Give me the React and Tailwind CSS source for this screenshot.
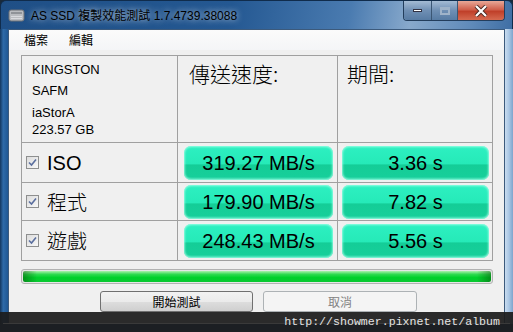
import React from "react";

// data
const rows = [
  { name: "ISO", speed: "319.27 MB/s", time: "3.36 s", h: "h-[39px]" },
  { name: "程式", speed: "179.90 MB/s", time: "7.82 s", h: "h-[37px]" },
  { name: "遊戲", speed: "248.43 MB/s", time: "5.56 s", h: "h-[39px]" },
];

const sans = "font-['Liberation_Sans','Noto_Sans_CJK_TC',sans-serif]";
const cjk = "font-['Noto_Sans_CJK_TC',sans-serif]";

const Check = () => (
  <span className="w-[13px] h-[13px] border border-[#8e8f8f] bg-[linear-gradient(135deg,#dcdcdc,#f8f8f8)] flex items-center justify-center">
    <svg width="9" height="9" viewBox="0 0 9 9">
      <path d="M1 4.5 L3.5 7 L8 1.5" stroke="#5a6e9e" strokeWidth="1.6" fill="none" />
    </svg>
  </span>
);

const Pill = ({ label }) => (
  <div
    className={`h-[34px] w-full rounded-[7px] flex items-center justify-center text-[20px] text-black ${sans} bg-[linear-gradient(to_bottom,#44f5cb_0%,#2cefc0_8%,#26eab8_52%,#14cd97_56%,#16cf9a_90%,#3fe0b6_100%)] shadow-[inset_0_0_2px_1px_rgba(160,255,230,0.8)]`}
  >
    {label}
  </div>
);

const TitleBar = () => (
  <div className="h-[29px] flex items-start bg-[linear-gradient(100deg,#1f4f86_0%,#245892_45%,#4a7bb0_68%,#88a9cc_80%,#5f8ab9_92%,#3f6ea4_100%)] border-t border-l border-r border-[#102c4c] rounded-t-[6px] relative">
    <div className="flex items-center h-[29px] pl-[7px] gap-[6px]">
      <svg width="17" height="15" viewBox="0 0 17 15">
        <rect x="1" y="2" width="15" height="11" rx="2" fill="#b9bcc0" stroke="#6c7076" />
        <rect x="3" y="4" width="11" height="2" fill="#8f9398" />
        <rect x="3" y="8" width="11" height="1" fill="#d8dade" />
        <rect x="3" y="10" width="11" height="1" fill="#d8dade" />
      </svg>
      <span className={`text-[12px] text-black ${sans} [text-shadow:0_0_6px_rgba(255,255,255,0.9)]`}>
        AS SSD 複製效能測試 1.7.4739.38088
      </span>
    </div>
    <div className="ml-auto mr-[7px] flex h-[20px] border border-t-0 border-[#223d5c] rounded-b-[4px] overflow-hidden">
      <div className="w-[28px] flex items-center justify-center bg-[linear-gradient(to_bottom,#a4bbd4,#6f8fb4_50%,#577ba3)] border-r border-[#3b5674]">
        <span className="w-[9px] h-[3px] bg-white border border-[#334]" />
      </div>
      <div className="w-[26px] flex items-center justify-center bg-[linear-gradient(to_bottom,#a4bbd4,#6f8fb4_50%,#577ba3)] border-r border-[#3b5674]">
        <span className="w-[10px] h-[8px] border-2 border-t-[3px] border-[#9fb3c9]" />
      </div>
      <div className="w-[46px] flex items-center justify-center bg-[linear-gradient(to_bottom,#e8a898,#d0604c_45%,#c0402a_55%,#d56a50)]">
        <svg width="14" height="12" viewBox="0 0 14 12">
          <path d="M2 1 L12 11 M12 1 L2 11" stroke="#4a2a24" strokeWidth="4" />
          <path d="M2 1 L12 11 M12 1 L2 11" stroke="#ffffff" strokeWidth="2.2" />
        </svg>
      </div>
    </div>
  </div>
);

const App = () => {
  return (
    <div className="w-[513px] h-[332px] relative overflow-hidden bg-[#1a2a3a]">
      <TitleBar />
      <div className="flex h-[295px]">
        <div className="w-[8px] bg-[linear-gradient(to_right,#13365e,#2e6aa8_40%,#1f5794)]" />
        <div className="w-[497px] border border-[#3c5a7c] flex flex-col bg-[#f0f0f0]">
          <div className={`h-[20px] flex items-center bg-[linear-gradient(to_bottom,#fbfbfb,#f4f5f7)] text-[12px] text-black ${cjk}`}>
            <span className="ml-[15px]">檔案</span>
            <span className="ml-[21px]">編輯</span>
          </div>
          <div className="pt-[5px] pl-[12px]">
            <div className="grid grid-cols-[155px_159px_154px] gap-px p-px bg-[#a0a0a0] w-[472px]">
              <div className={`h-[86px] bg-[#f0f0f0] pl-[10px] pt-[3px] text-[13px] text-black ${sans}`}>
                <div className="leading-[21px]">KINGSTON</div>
                <div className="leading-[22px]">SAFM</div>
                <div className="leading-[17px] pt-[2px]">iaStorA</div>
                <div className="leading-[17px]">223.57 GB</div>
              </div>
              <div className={`bg-[#f0f0f0] pl-[11px] pt-[2px] text-[21px] font-light text-black ${cjk}`}>傳送速度:</div>
              <div className={`bg-[#f0f0f0] pl-[9px] pt-[2px] text-[21px] font-light text-black ${cjk}`}>期間:</div>
              {rows.map((r) => (
                <React.Fragment key={r.name}>
                  <div className={`${r.h} bg-[#f0f0f0] flex items-center pl-[4px] gap-[8px]`}>
                    <Check />
                    <span className={`text-[20px] text-black leading-none ${r.name === "ISO" ? sans : cjk + " font-light"}`}>{r.name}</span>
                  </div>
                  <div className={`${r.h} bg-[#f0f0f0] flex items-center pl-[6px] pr-[4px]`}>
                    <Pill label={r.speed} />
                  </div>
                  <div className={`${r.h} bg-[#f0f0f0] flex items-center pl-[4px] pr-[3px]`}>
                    <Pill label={r.time} />
                  </div>
                </React.Fragment>
              ))}
            </div>
            <div className="mt-[8px] w-[472px] h-[15px] rounded-[3px] border border-[#b2b2b2] p-px bg-[#e6e6e6]">
              <div className="h-full rounded-[2px] bg-[linear-gradient(to_right,rgba(0,70,0,0.45),rgba(0,70,0,0)_3%,rgba(0,70,0,0)_97%,rgba(0,70,0,0.45)),linear-gradient(to_bottom,#aef0ae,#30da50_30%,#00d02a_60%,#0ac832)]" />
            </div>
            <div className="mt-[7px] flex gap-[10px] pl-[79px]">
              <div className={`w-[153px] h-[21px] rounded-[3px] border border-[#707070] bg-[linear-gradient(to_bottom,#f2f2f2,#ebebeb_50%,#dddddd_52%,#cfcfcf)] flex items-center justify-center text-[12px] text-black ${cjk}`}>
                開始測試
              </div>
              <div className={`w-[154px] h-[21px] rounded-[3px] border border-[#adb2b5] bg-[#f4f4f4] flex items-center justify-center text-[12px] text-[#838383] ${cjk}`}>
                取消
              </div>
            </div>
          </div>
        </div>
        <div className="w-[8px] bg-[linear-gradient(to_right,#c9dcef,#a9c6e4_50%,#7ea4cc)]" />
      </div>
      <div className="h-[8px] bg-[#1f4f86]" />
      <div className="absolute left-0 top-[312px] w-[513px] h-[20px] bg-[rgba(28,28,28,0.93)] flex items-center justify-end pr-[13px]">
        <div className="absolute left-[3px] right-[3px] top-[11px] h-[1px] bg-[#3a3a3a]" />
        <span className="relative font-['Liberation_Mono',monospace] text-[11.6px] text-[#e4e4e4]">
          http://showmer.pixnet.net/album
        </span>
      </div>
    </div>
  );
};

export default App;
